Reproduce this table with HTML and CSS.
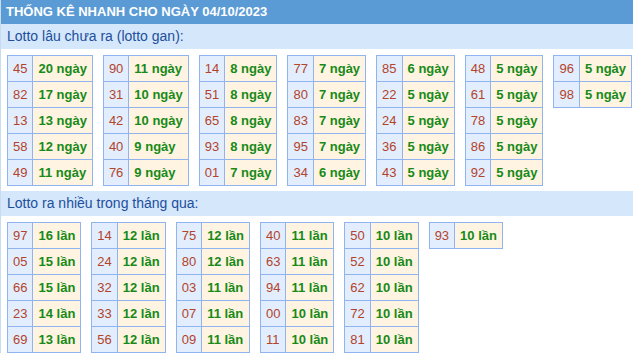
FILE: index.html
```html
<!DOCTYPE html>
<html lang="vi">
<head>
<meta charset="utf-8">
<title>Thống kê nhanh</title>
<link rel="stylesheet" href="styles.css">
</head>
<body>
<div class="box">
  <div class="title">THỐNG KÊ NHANH CHO NGÀY 04/10/2023</div>
  <div class="band">Lotto lâu chưa ra (lotto gan):</div>
  <div class="tables">
    <table class="lt"><tr><td class="n">45</td><td class="v">20 ngày</td></tr><tr><td class="n">82</td><td class="v">17 ngày</td></tr><tr><td class="n">13</td><td class="v">13 ngày</td></tr><tr><td class="n">58</td><td class="v">12 ngày</td></tr><tr><td class="n">49</td><td class="v">11 ngày</td></tr></table>
    <table class="lt"><tr><td class="n">90</td><td class="v">11 ngày</td></tr><tr><td class="n">31</td><td class="v">10 ngày</td></tr><tr><td class="n">42</td><td class="v">10 ngày</td></tr><tr><td class="n">40</td><td class="v">9 ngày</td></tr><tr><td class="n">76</td><td class="v">9 ngày</td></tr></table>
    <table class="lt"><tr><td class="n">14</td><td class="v">8 ngày</td></tr><tr><td class="n">51</td><td class="v">8 ngày</td></tr><tr><td class="n">65</td><td class="v">8 ngày</td></tr><tr><td class="n">93</td><td class="v">8 ngày</td></tr><tr><td class="n">01</td><td class="v">7 ngày</td></tr></table>
    <table class="lt"><tr><td class="n">77</td><td class="v">7 ngày</td></tr><tr><td class="n">80</td><td class="v">7 ngày</td></tr><tr><td class="n">83</td><td class="v">7 ngày</td></tr><tr><td class="n">95</td><td class="v">7 ngày</td></tr><tr><td class="n">34</td><td class="v">6 ngày</td></tr></table>
    <table class="lt"><tr><td class="n">85</td><td class="v">6 ngày</td></tr><tr><td class="n">22</td><td class="v">5 ngày</td></tr><tr><td class="n">24</td><td class="v">5 ngày</td></tr><tr><td class="n">36</td><td class="v">5 ngày</td></tr><tr><td class="n">43</td><td class="v">5 ngày</td></tr></table>
    <table class="lt"><tr><td class="n">48</td><td class="v">5 ngày</td></tr><tr><td class="n">61</td><td class="v">5 ngày</td></tr><tr><td class="n">78</td><td class="v">5 ngày</td></tr><tr><td class="n">86</td><td class="v">5 ngày</td></tr><tr><td class="n">92</td><td class="v">5 ngày</td></tr></table>
    <table class="lt"><tr><td class="n">96</td><td class="v">5 ngày</td></tr><tr><td class="n">98</td><td class="v">5 ngày</td></tr></table>
  </div>
  <div class="band">Lotto ra nhiều trong tháng qua:</div>
  <div class="tables">
    <table class="lt"><tr><td class="n">97</td><td class="v">16 lần</td></tr><tr><td class="n">05</td><td class="v">15 lần</td></tr><tr><td class="n">66</td><td class="v">15 lần</td></tr><tr><td class="n">23</td><td class="v">14 lần</td></tr><tr><td class="n">69</td><td class="v">13 lần</td></tr></table>
    <table class="lt"><tr><td class="n">14</td><td class="v">12 lần</td></tr><tr><td class="n">24</td><td class="v">12 lần</td></tr><tr><td class="n">32</td><td class="v">12 lần</td></tr><tr><td class="n">33</td><td class="v">12 lần</td></tr><tr><td class="n">56</td><td class="v">12 lần</td></tr></table>
    <table class="lt"><tr><td class="n">75</td><td class="v">12 lần</td></tr><tr><td class="n">80</td><td class="v">12 lần</td></tr><tr><td class="n">03</td><td class="v">11 lần</td></tr><tr><td class="n">07</td><td class="v">11 lần</td></tr><tr><td class="n">09</td><td class="v">11 lần</td></tr></table>
    <table class="lt"><tr><td class="n">40</td><td class="v">11 lần</td></tr><tr><td class="n">63</td><td class="v">11 lần</td></tr><tr><td class="n">94</td><td class="v">11 lần</td></tr><tr><td class="n">00</td><td class="v">10 lần</td></tr><tr><td class="n">11</td><td class="v">10 lần</td></tr></table>
    <table class="lt"><tr><td class="n">50</td><td class="v">10 lần</td></tr><tr><td class="n">52</td><td class="v">10 lần</td></tr><tr><td class="n">62</td><td class="v">10 lần</td></tr><tr><td class="n">72</td><td class="v">10 lần</td></tr><tr><td class="n">81</td><td class="v">10 lần</td></tr></table>
    <table class="lt"><tr><td class="n">93</td><td class="v">10 lần</td></tr></table>
  </div>
</div>
</body>
</html>
```

FILE: styles.css
```css
html, body {
  margin: 0;
  padding: 0;
  background: #ffffff;
}
body {
  font-family: "Liberation Sans", Arial, sans-serif;
  font-size: 13px;
}
.box {
  border-left: 1px solid #c9dbef;
  min-height: 353px;
  box-sizing: border-box;
}
.title {
  height: 24px;
  line-height: 24px;
  background: #5b9bd5;
  color: #ffffff;
  font-weight: bold;
  font-size: 13px;
  padding-left: 5px;
  white-space: nowrap;
}
.band {
  height: 25px;
  line-height: 25px;
  background: #d5e7fb;
  color: #1d4f9c;
  font-size: 14px;
  padding-left: 6px;
}
.tables {
  display: flex;
  align-items: flex-start;
  gap: 10px;
  padding: 6px 6px 5px;
}
.lt {
  border-collapse: collapse;
  flex: none;
}
.lt td {
  border: 1px solid #8fb4ef;
  height: 25px;
  padding: 0 5px;
  white-space: nowrap;
}
.lt .n {
  background: #e2eefd;
  color: #b3432b;
}
.lt .v {
  background: #fff3e2;
  color: #178a17;
  font-weight: bold;
}
```
